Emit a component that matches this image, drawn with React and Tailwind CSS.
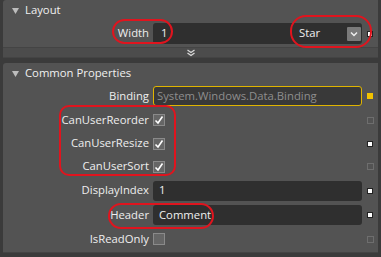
import React from 'react';

const font = { fontFamily: '"Open Sans", "Noto Sans", sans-serif' };

const Marker = ({ kind }) => {
  if (kind === 'white') return <div className="w-[6px] h-[6px] bg-white border border-[#222]" />;
  if (kind === 'yellow') return <div className="w-[6px] h-[6px] bg-[#f2c200]" />;
  return <div className="w-[7px] h-[7px] border border-[#6e6e6e]" />;
};

const Check = ({ checked }) => (
  <div className="w-[12px] h-[12px] bg-[#666] border border-[#8a8a8a] flex items-center justify-center">
    {checked && (
      <svg width="10" height="10" viewBox="0 0 10 10">
        <path d="M1.5 5.5 L4 8 L8.5 1.5" stroke="#fff" strokeWidth="1.6" fill="none" />
      </svg>
    )}
  </div>
);

const Row = ({ label, h, marker, children }) => (
  <div className={`flex items-center ${h}`}>
    <div className="w-[150px] pr-[4px] text-right text-[11.3px] text-[#eee]">{label}</div>
    <div className="w-[209px] flex items-center">{children}</div>
    <div className="w-[16px] flex justify-center">{marker && <Marker kind={marker} />}</div>
  </div>
);

const Header = ({ title }) => (
  <div className="flex items-center h-[21px] pl-[9px] gap-[6px]">
    <svg width="7" height="6" viewBox="0 0 7 6"><path d="M0 0 H7 L3.5 6 Z" fill="#bdbdbd" /></svg>
    <span className="text-[11.3px] text-[#f0f0f0]">{title}</span>
  </div>
);

export default function App() {
  return (
    <div style={font} className="relative w-[381px] h-[257px] bg-[#3b3b3b] overflow-hidden">
      {/* Layout section */}
      <div className="ml-[3px] mr-[3px] h-[58px] bg-[#535353] rounded-tl-[3px] flex flex-col">
        <Header title="Layout" />
        <div className="h-[25px] flex items-center">
          <div className="w-[150px] text-right text-[11.3px] text-[#eee] pr-[4px]">Width</div>
          <div className="w-[209px] h-[21px] bg-[#2f2f2f] rounded-[3px] flex items-center">
            <span className="pl-[8px] text-[11.3px] text-[#f0f0f0] flex-1">1</span>
            <span className="text-[11.3px] text-[#f0f0f0] w-[48px]">Star</span>
            <div className="w-[14px] h-[14px] bg-[#7a7a7a] flex items-center justify-center mr-[1px] rounded-[1px]">
              <svg width="8" height="6" viewBox="0 0 8 6"><path d="M1 1.5 L4 4.5 L7 1.5" stroke="#eee" strokeWidth="1.5" fill="none" /></svg>
            </div>
          </div>
          <div className="w-[16px] flex justify-center"><Marker kind="white" /></div>
        </div>
        <div className="mt-auto h-[11px] bg-[#4c4c4c] border-t border-[#444] border-b flex items-center justify-center">
          <svg width="10" height="8" viewBox="0 0 10 8">
            <path d="M1.5 1 L5 3.5 L8.5 1 M1.5 4 L5 6.5 L8.5 4" stroke="#d8d8d8" strokeWidth="1.3" fill="none" />
          </svg>
        </div>
      </div>

      {/* Common Properties section */}
      <div className="mt-[5px] ml-[3px] mr-[3px] h-[190px] bg-[#535353] rounded-tl-[3px] border-b border-[#444]">
        <Header title="Common Properties" />
        <Row label="Binding" h="h-[24px]" marker="yellow">
          <div className="w-full h-[20px] rounded-[3px] border border-[#e0b400] bg-[#393939] flex items-center pl-[3px] text-[11.3px] text-[#8e8e8e]">
            System.Windows.Data.Binding
          </div>
        </Row>
        <Row label="CanUserReorder" h="h-[24px]" marker="grey"><Check checked /></Row>
        <Row label="CanUserResize" h="h-[23px]" marker="white"><Check checked /></Row>
        <Row label="CanUserSort" h="h-[23px]" marker="grey"><Check checked /></Row>
        <Row label="DisplayIndex" h="h-[25px]" marker="white">
          <div className="w-full h-[20px] rounded-[3px] bg-[#2f2f2f] flex items-center pl-[6px] text-[11.3px] text-[#f0f0f0]">1</div>
        </Row>
        <Row label="Header" h="h-[24px]" marker="white">
          <div className="w-full h-[20px] rounded-[3px] bg-[#2f2f2f] flex items-center pl-[6px] text-[11.3px] text-[#f0f0f0]">Comment</div>
        </Row>
        <Row label="IsReadOnly" h="h-[24px]" marker="grey"><Check /></Row>
      </div>

      {/* red annotation ellipses */}
      <div className="absolute left-[112px] top-[19px] w-[61px] h-[25px] rounded-full border-2 border-[#e0141e]" />
      <div className="absolute left-[290px] top-[15px] w-[82px] h-[33px] rounded-[16px] border-2 border-[#e0141e]" />
      <div className="absolute left-[59px] top-[105px] w-[117px] h-[71px] rounded-[10px] border-2 border-[#e0141e]" />
      <div className="absolute left-[108px] top-[203px] w-[106px] h-[26px] rounded-full border-2 border-[#e0141e]" />
    </div>
  );
}
